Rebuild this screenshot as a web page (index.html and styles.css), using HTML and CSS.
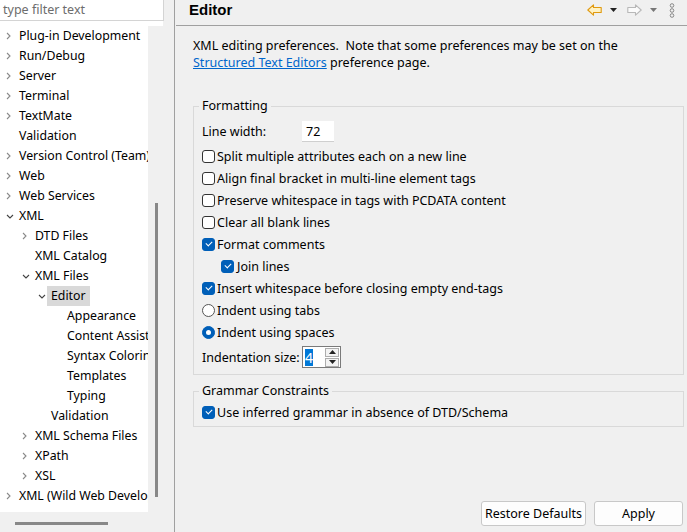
FILE: index.html
```html
<!DOCTYPE html>
<html>
<head>
<meta charset="utf-8">
<link rel="stylesheet" href="styles.css">
</head>
<body>
<div class="app">
  <aside class="nav">
    <div class="filter">type filter text</div>
    <div class="treewrap">
      <div class="tree">
        <div class="row l0"><span class="chev"><svg width="5" height="8" viewBox="0 0 5 8"><path d="M1 1l3 3-3 3" fill="none" stroke="#8a8a8a" stroke-width="1.1"/></svg></span><span class="lbl">Plug-in Development</span></div>
        <div class="row l0"><span class="chev"><svg width="5" height="8" viewBox="0 0 5 8"><path d="M1 1l3 3-3 3" fill="none" stroke="#8a8a8a" stroke-width="1.1"/></svg></span><span class="lbl">Run/Debug</span></div>
        <div class="row l0"><span class="chev"><svg width="5" height="8" viewBox="0 0 5 8"><path d="M1 1l3 3-3 3" fill="none" stroke="#8a8a8a" stroke-width="1.1"/></svg></span><span class="lbl">Server</span></div>
        <div class="row l0"><span class="chev"><svg width="5" height="8" viewBox="0 0 5 8"><path d="M1 1l3 3-3 3" fill="none" stroke="#8a8a8a" stroke-width="1.1"/></svg></span><span class="lbl">Terminal</span></div>
        <div class="row l0"><span class="chev"><svg width="5" height="8" viewBox="0 0 5 8"><path d="M1 1l3 3-3 3" fill="none" stroke="#8a8a8a" stroke-width="1.1"/></svg></span><span class="lbl">TextMate</span></div>
        <div class="row l0"><span class="chev"></span><span class="lbl">Validation</span></div>
        <div class="row l0"><span class="chev"><svg width="5" height="8" viewBox="0 0 5 8"><path d="M1 1l3 3-3 3" fill="none" stroke="#8a8a8a" stroke-width="1.1"/></svg></span><span class="lbl">Version Control (Team)</span></div>
        <div class="row l0"><span class="chev"><svg width="5" height="8" viewBox="0 0 5 8"><path d="M1 1l3 3-3 3" fill="none" stroke="#8a8a8a" stroke-width="1.1"/></svg></span><span class="lbl">Web</span></div>
        <div class="row l0"><span class="chev"><svg width="5" height="8" viewBox="0 0 5 8"><path d="M1 1l3 3-3 3" fill="none" stroke="#8a8a8a" stroke-width="1.1"/></svg></span><span class="lbl">Web Services</span></div>
        <div class="row l0"><span class="chev"><svg width="8" height="5" viewBox="0 0 8 5"><path d="M1 1l3 3 3-3" fill="none" stroke="#444" stroke-width="1.1"/></svg></span><span class="lbl">XML</span></div>
        <div class="row l1"><span class="chev"><svg width="5" height="8" viewBox="0 0 5 8"><path d="M1 1l3 3-3 3" fill="none" stroke="#8a8a8a" stroke-width="1.1"/></svg></span><span class="lbl">DTD Files</span></div>
        <div class="row l1"><span class="chev"></span><span class="lbl">XML Catalog</span></div>
        <div class="row l1"><span class="chev"><svg width="8" height="5" viewBox="0 0 8 5"><path d="M1 1l3 3 3-3" fill="none" stroke="#444" stroke-width="1.1"/></svg></span><span class="lbl">XML Files</span></div>
        <div class="row l2"><span class="chev"><svg width="8" height="5" viewBox="0 0 8 5"><path d="M1 1l3 3 3-3" fill="none" stroke="#444" stroke-width="1.1"/></svg></span><span class="lbl sel">Editor</span></div>
        <div class="row l3"><span class="chev"></span><span class="lbl">Appearance</span></div>
        <div class="row l3"><span class="chev"></span><span class="lbl">Content Assist</span></div>
        <div class="row l3"><span class="chev"></span><span class="lbl">Syntax Coloring</span></div>
        <div class="row l3"><span class="chev"></span><span class="lbl">Templates</span></div>
        <div class="row l3"><span class="chev"></span><span class="lbl">Typing</span></div>
        <div class="row l2"><span class="chev"></span><span class="lbl">Validation</span></div>
        <div class="row l1"><span class="chev"><svg width="5" height="8" viewBox="0 0 5 8"><path d="M1 1l3 3-3 3" fill="none" stroke="#8a8a8a" stroke-width="1.1"/></svg></span><span class="lbl">XML Schema Files</span></div>
        <div class="row l1"><span class="chev"><svg width="5" height="8" viewBox="0 0 5 8"><path d="M1 1l3 3-3 3" fill="none" stroke="#8a8a8a" stroke-width="1.1"/></svg></span><span class="lbl">XPath</span></div>
        <div class="row l1"><span class="chev"><svg width="5" height="8" viewBox="0 0 5 8"><path d="M1 1l3 3-3 3" fill="none" stroke="#8a8a8a" stroke-width="1.1"/></svg></span><span class="lbl">XSL</span></div>
        <div class="row l0"><span class="chev"><svg width="5" height="8" viewBox="0 0 5 8"><path d="M1 1l3 3-3 3" fill="none" stroke="#8a8a8a" stroke-width="1.1"/></svg></span><span class="lbl">XML (Wild Web Developer)</span></div>
      </div>
      <div class="vscroll"><div class="vthumb"></div></div>
    </div>
    <div class="hscroll"><div class="hthumb"></div></div>
  </aside>
  <div class="sash"><div class="sashline"></div></div>
  <main class="page">
    <header class="head">
      <h1 class="title">Editor</h1>
      <div class="tools">
        <svg width="15" height="12" viewBox="0 0 15 12"><path d="M0.8 6L6.5 0.8V3.5H14.2V8.5H6.5V11.2Z" fill="#fff2c4" stroke="#e09a10" stroke-width="1.1" stroke-linejoin="round"/></svg>
        <svg class="drop" width="7" height="4" viewBox="0 0 7 4"><path d="M0 0h7L3.5 4Z" fill="#222"/></svg>
        <svg class="fwd" width="15" height="12" viewBox="0 0 15 12"><path d="M14.2 6L8.5 0.8V3.5H0.8V8.5H8.5V11.2Z" fill="#fbfbfb" stroke="#b8b8b8" stroke-width="1.1" stroke-linejoin="round"/></svg>
        <svg class="drop" width="7" height="4" viewBox="0 0 7 4"><path d="M0 0h7L3.5 4Z" fill="#777"/></svg>
        <svg class="menu" width="6" height="15" viewBox="0 0 6 15"><circle cx="3" cy="2.5" r="1.8" fill="none" stroke="#888" stroke-width="1"/><circle cx="3" cy="7.5" r="1.8" fill="none" stroke="#888" stroke-width="1"/><circle cx="3" cy="12.5" r="1.8" fill="none" stroke="#888" stroke-width="1"/></svg>
      </div>
    </header>
    <p class="desc">XML editing preferences.&nbsp; Note that some preferences may be set on the<br><a class="link">Structured Text Editors</a> preference page.</p>

    <fieldset class="group fmt">
      <legend>Formatting</legend>
      <div class="line linew"><span class="lab">Line width:</span><span class="num">72</span></div>
      <div class="line"><span class="cb"></span>Split multiple attributes each on a new line</div>
      <div class="line"><span class="cb"></span>Align final bracket in multi-line element tags</div>
      <div class="line"><span class="cb"></span>Preserve whitespace in tags with PCDATA content</div>
      <div class="line"><span class="cb"></span>Clear all blank lines</div>
      <div class="line"><span class="cb on"></span>Format comments</div>
      <div class="line sub"><span class="cb on"></span>Join lines</div>
      <div class="line"><span class="cb on"></span>Insert whitespace before closing empty end-tags</div>
      <div class="line"><span class="rb"></span>Indent using tabs</div>
      <div class="line"><span class="rb on"></span>Indent using spaces</div>
      <div class="line indent"><span class="lab">Indentation size:</span>
        <span class="spin"><span class="spinval">4</span><span class="arrows"><span class="arr"><svg width="7" height="4" viewBox="0 0 7 4"><path d="M3.5 0L7 4H0Z" fill="#222"/></svg></span><span class="arr"><svg width="7" height="4" viewBox="0 0 7 4"><path d="M0 0h7L3.5 4Z" fill="#222"/></svg></span></span></span>
      </div>
    </fieldset>

    <fieldset class="group gram">
      <legend>Grammar Constraints</legend>
      <div class="line"><span class="cb on"></span>Use inferred grammar in absence of DTD/Schema</div>
    </fieldset>

    <div class="buttons">
      <button class="btn restore">Restore Defaults</button>
      <button class="btn apply">Apply</button>
    </div>
  </main>
</div>
</body>
</html>
```

FILE: styles.css
```css
* { box-sizing: border-box; }
html, body { margin: 0; padding: 0; }
body {
  width: 687px;
  height: 532px;
  overflow: hidden;
  background: #f0f0f0;
  font-family: "Noto Sans", "Segoe UI", sans-serif;
  font-size: 12.5px;
  color: #000;
}
.app { display: flex; height: 532px; }

/* left navigation */
.nav { width: 164px; display: flex; flex-direction: column; flex: none; }
.filter {
  height: 21px;
  background: #fff;
  border-right: 1px solid #d4d4d4;
  border-bottom: 1px solid #d4d4d4;
  color: #6d6d6d;
  padding: 0 0 0 3px;
  line-height: 20px;
  font-size: 12.5px;
}
.treewrap { display: flex; height: 491px; background: #fff; width: 163px; }
.tree { width: 148px; overflow: hidden; padding-top: 5px; background: #fff; border-bottom-right-radius: 4px; font-size: 12.3px; }
.row { height: 20px; display: flex; align-items: center; white-space: nowrap; }
.row.l0 { padding-left: 4px; }
.row.l1 { padding-left: 20px; }
.row.l2 { padding-left: 36px; }
.row.l3 { padding-left: 52px; }
.chev { width: 15px; flex: none; display: flex; align-items: center; justify-content: flex-start; padding-left: 2px; }
.lbl { line-height: 20px; }
.lbl.sel { background: #d9d9d9; padding: 0 4px; margin-left: -4px; }
.vscroll { width: 15px; margin-top: 5px; background: #f0f0f0; }
.vthumb { width: 3px; margin-left: 7px; margin-top: 177px; height: 294px; background: #888; }
.hscroll { flex: 1; background: #f0f0f0; width: 164px; padding-top: 10px; }
.hthumb { margin-left: 15px; width: 93px; height: 3px; background: #888; }

.sash { width: 11px; flex: none; display: flex; justify-content: flex-end; }
.sashline { width: 1px; background: #a0a0a0; }

/* right page */
.page { flex: 1; display: flex; flex-direction: column; min-width: 0; }
.head {
  height: 26px;
  border-bottom: 1px solid #a0a0a0;
  display: flex;
  align-items: center;
  justify-content: space-between;
  padding-left: 13px;
  margin-left: 1px;
}
.title { font-size: 15px; font-weight: bold; margin: 0; line-height: 20px; padding-bottom: 5px; font-family: "Liberation Sans", "Noto Sans", sans-serif; }
.tools { display: flex; align-items: center; padding-right: 12px; padding-bottom: 5px; }
.tools .drop { margin-left: 8px; }
.tools .fwd { margin-left: 10px; }
.tools .menu { margin-left: 12px; margin-top: 1px; }
.desc { margin: 11px 0 0 18px; line-height: 17px; }
.link { color: #0066cc; text-decoration: underline; }

.group {
  margin: 0 3px 0 18px;
  border: 1px solid #d9d9d9;
  border-radius: 0;
  padding: 6px 0 5px 8px;
}
.group legend { padding: 0 3px; margin-left: -3px; line-height: 16px; }
.fmt { margin-top: 27px; }
.gram { margin-top: 8px; padding-top: 2px; padding-bottom: 3px; }
.line { height: 22px; display: flex; align-items: center; white-space: nowrap; }
.line.sub { padding-left: 19px; }
.line.sub .cb { margin-right: 3px; }
.linew { margin-bottom: 3px; }
.lab { width: 100px; flex: none; }
.num { width: 32px; height: 21px; background: #fff; border-bottom: 1px solid #cfcfcf; padding-left: 4px; line-height: 21px; }
.cb {
  width: 13px; height: 13px; flex: none;
  border: 1px solid #333; border-radius: 3px; background: #fff;
  margin-right: 2px;
  display: inline-flex; align-items: center; justify-content: center;
}
.cb.on { background: #005fb8; border-color: #005fb8; }
.cb.on::after {
  content: "";
  width: 5px; height: 3px;
  border-left: 1.2px solid #fff; border-bottom: 1.2px solid #fff;
  transform: rotate(-45deg);
  margin-top: -2px;
}
.rb {
  width: 13px; height: 13px; flex: none;
  border: 1px solid #555; border-radius: 50%; background: #fff;
  margin-right: 2px;
  display: inline-flex; align-items: center; justify-content: center;
}
.rb.on { background: #005fb8; border-color: #005fb8; }
.rb.on::after { content: ""; width: 5px; height: 5px; border-radius: 50%; background: #fff; }
.line.indent { height: 24px; margin-top: 2px; }
.spin {
  width: 39px; height: 22px; background: #fff;
  border: 1px solid #7a7a7a;
  display: flex; align-items: center; padding-left: 2px;
}
.spinval { background: #0078d7; color: #fff; width: 8px; height: 17px; line-height: 17px; font-size: 14px; text-align: center; }
.arrows { margin-left: auto; margin-right: 1px; display: flex; flex-direction: column; gap: 1px; }
.arr { width: 14px; height: 9px; border: 1px solid #adadad; background: #f3f3f3; display: flex; align-items: center; justify-content: center; }

.buttons { margin-top: auto; display: flex; justify-content: flex-end; gap: 8px; padding: 0 4px 6px 0; }
.btn {
  height: 25px;
  font-family: inherit; font-size: 12.5px; color: #000;
  background: #fdfdfd; border: 1px solid #c8c8c8; border-radius: 3px;
  padding: 0;
}
.restore { width: 105px; }
.apply { width: 89px; }
```
